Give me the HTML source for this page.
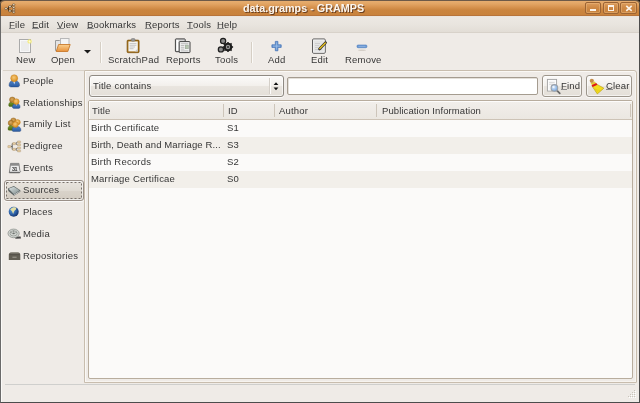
<!DOCTYPE html>
<html><head><meta charset="utf-8">
<style>
*{margin:0;padding:0;box-sizing:border-box}
html,body{width:640px;height:403px;overflow:hidden;background:#efebe7}
body{position:relative;font-family:"Liberation Sans",sans-serif;font-size:9.5px;letter-spacing:0.2px;color:#363636}
.a{position:absolute}
.t{position:absolute;white-space:nowrap;line-height:12px;will-change:transform}
u{text-decoration:none;position:relative}
u:after{content:"";position:absolute;left:0;right:0;bottom:1px;height:1px;background:#8a8a8a}
#win{position:absolute;left:0;top:0;width:640px;height:403px;border:1px solid #4c4c4c;border-left-color:#6a6a6a;border-top:none;background:#efebe7;box-shadow:inset 1px 0 0 #fbfaf8}
#title{position:absolute;left:0;top:0;width:640px;height:16px;background:linear-gradient(#e7ae70 0px,#e2a463 3px,#d48f4a 7px,#cb853f 9px,#c8823c 14px,#b8743a 14px,#b8743a 15px);border-radius:4px 4px 0 0;border-top:1px solid #6e5a48;box-shadow:inset 1px 0 0 #5a4a3a,inset -1px 0 0 #5a4a3a}
#title .tx{position:absolute;left:243px;top:1px;font-weight:bold;font-size:10.8px;letter-spacing:0;color:#fbf6f0;text-shadow:1px 1px 0 #6a4020;line-height:13px;will-change:transform}
.wb{position:absolute;top:1px;width:16px;height:12px;border:1px solid #9c6434;border-radius:2px;background:linear-gradient(#dc9c5c,#cd8844 50%,#c8823e);box-shadow:inset 0 0 0 1px rgba(240,190,130,.45)}
#menubar{position:absolute;left:1px;top:16px;width:638px;height:17px;background:linear-gradient(#e8e1d9 0px,#ece8e3 1px,#e9e5df 8px,#e2ddd6 16px);border-bottom:1px solid #d8d2ca}
.mi{position:absolute;top:3px;line-height:12px;will-change:transform}
#toolbar{position:absolute;left:1px;top:33px;width:638px;height:37px;background:#efebe7}
.tl{position:absolute;top:21px;line-height:12px;will-change:transform}
.sep{position:absolute;top:9px;width:1px;height:21px;background:#d6cfc5;box-shadow:1px 0 0 #fbfaf8}
.it{left:23px}
#pane{position:absolute;left:84px;top:70px;width:553px;height:313px;border:1px solid #c8bdae;border-radius:0 3px 1px 0;box-shadow:inset 1px 1px 0 #faf8f5,inset -1px -1px 0 #f7f4f0}
.btn{position:absolute;border:1px solid #9d968c;border-radius:3px;background:linear-gradient(#fbfaf9 0%,#f3f0ec 48%,#e9e5df 52%,#e4dfd8 100%);box-shadow:inset 0 0 0 1px rgba(255,255,255,.6),0 1px 0 rgba(255,255,255,.7)}
#tree{position:absolute;left:88px;top:100px;width:545px;height:279px;border:1px solid #b8ad9e;border-radius:2px;background:#fbfaf9;overflow:hidden}
#hdr{position:absolute;left:0;top:0;width:543px;height:19px;background:linear-gradient(#f2efeb,#ebe7e1);border-bottom:1px solid #cdc3b6;box-shadow:inset 1px 1px 0 #fdfcfb}
.hs{position:absolute;top:3px;width:1px;height:13px;background:#cdc5ba}
.row{position:absolute;left:0;width:543px;height:17px}
.row .t{top:2px}
#status{position:absolute;left:5px;top:384px;width:630px;height:1px;background:#cfcfcd}
</style></head><body>
<div id="win"></div>
<div class="a" style="left:0;top:0;width:4px;height:4px;background:#1e1a16"></div>
<div class="a" style="left:636px;top:0;width:4px;height:4px;background:#1e1a16"></div>
<div id="title">
  <div class="tx">data.gramps - GRAMPS</div>
  <div class="wb" style="left:585px;width:16px"><div class="a" style="left:4px;top:6px;width:6px;height:2px;background:#fbf3ea"></div></div>
  <div class="wb" style="left:603px;width:16px"><div class="a" style="left:4px;top:2px;width:6px;height:6px;border:1px solid #fbf3ea;border-top-width:2px"></div></div>
  <div class="wb" style="left:620px;width:17px"><svg class="a" style="left:4px;top:2px" width="8" height="7" viewBox="0 0 8 7"><path d="M1.3 0.8L6.7 5.9M6.7 0.8L1.3 5.9" stroke="#fbf3ea" stroke-width="1.6"/></svg></div>
</div>
<div id="menubar">
  <div class="mi" style="left:8px"><u>F</u>ile</div>
  <div class="mi" style="left:31px"><u>E</u>dit</div>
  <div class="mi" style="left:56px"><u>V</u>iew</div>
  <div class="mi" style="left:86px"><u>B</u>ookmarks</div>
  <div class="mi" style="left:144px"><u>R</u>eports</div>
  <div class="mi" style="left:186px"><u>T</u>ools</div>
  <div class="mi" style="left:216px"><u>H</u>elp</div>
</div>
<div id="toolbar">
  <div class="tl" style="left:15px">New</div>
  <div class="tl" style="left:50px">Open</div>
  <div class="sep" style="left:99px"></div>
  <div class="tl" style="left:107px">ScratchPad</div>
  <div class="tl" style="left:165px">Reports</div>
  <div class="tl" style="left:214px">Tools</div>
  <div class="sep" style="left:250px"></div>
  <div class="tl" style="left:267px">Add</div>
  <div class="tl" style="left:310px">Edit</div>
  <div class="tl" style="left:344px">Remove</div>
</div>
<div class="a" style="left:3px;top:70px;width:81px;height:1px;background:#d9d2c8"></div>
<div id="side">
  <div class="t it" style="top:75px">People</div>
  <div class="t it" style="top:97px">Relationships</div>
  <div class="t it" style="top:118px">Family List</div>
  <div class="t it" style="top:140px">Pedigree</div>
  <div class="t it" style="top:162px">Events</div>
  <div class="btn" style="left:4px;top:180px;width:80px;height:21px;border-color:#9a9088;background:linear-gradient(#e9e5df,#e0dbd3 50%,#d9d3ca 52%,#d3ccc2)"></div>
  <svg class="a" style="left:6px;top:182px" width="76" height="17" viewBox="0 0 76 17"><rect x="0.5" y="0.5" width="75" height="16" fill="none" stroke="#77706a" stroke-width="1" stroke-dasharray="2 2"/></svg>
  <div class="t it" style="top:184px">Sources</div>
  <div class="t it" style="top:206px">Places</div>
  <div class="t it" style="top:228px">Media</div>
  <div class="t it" style="top:250px">Repositories</div>
</div>
<div id="pane"></div>
<div class="btn" style="left:89px;top:75px;width:195px;height:22px;border-color:#8f8a83"></div>
<div class="a" style="left:269px;top:78px;width:1px;height:16px;background:#d4cfc8;box-shadow:1px 0 0 #fdfcfb"></div>
<svg class="a" style="left:273px;top:81px" width="6" height="10" viewBox="0 0 6 10"><path d="M0.6 4H5.4L3 1.2Z M0.6 6.4H5.4L3 9.2Z" fill="#111"/></svg>
<div class="t" style="left:93px;top:80px">Title contains</div>
<div class="a" style="left:287px;top:77px;width:251px;height:18px;border:1px solid #a59c90;border-radius:2px;background:#fff;box-shadow:inset 1px 1px 0 #e4e0da"></div>
<div class="btn" style="left:542px;top:75px;width:40px;height:22px"></div>
<div class="t" style="left:561px;top:80px"><u>F</u>ind</div>
<div class="btn" style="left:586px;top:75px;width:46px;height:22px"></div>
<div class="t" style="left:606px;top:80px"><u>C</u>lear</div>
<div id="tree">
  <div id="hdr">
    <div class="t" style="left:3px;top:4px">Title</div>
    <div class="hs" style="left:134px"></div>
    <div class="t" style="left:139px;top:4px">ID</div>
    <div class="hs" style="left:185px"></div>
    <div class="t" style="left:190px;top:4px">Author</div>
    <div class="hs" style="left:287px"></div>
    <div class="t" style="left:293px;top:4px;letter-spacing:0.1px">Publication Information</div>
    <div class="hs" style="left:541px"></div>
  </div>
  <div class="row" style="top:19px;background:#fbfaf9"><div class="t" style="left:2px">Birth Certificate</div><div class="t" style="left:138px">S1</div></div>
  <div class="row" style="top:36px;background:#f2efea"><div class="t" style="left:2px;letter-spacing:0.12px">Birth, Death and Marriage R...</div><div class="t" style="left:138px">S3</div></div>
  <div class="row" style="top:53px;background:#fbfaf9"><div class="t" style="left:2px">Birth Records</div><div class="t" style="left:138px">S2</div></div>
  <div class="row" style="top:70px;background:#f2efea"><div class="t" style="left:2px">Marriage Certificae</div><div class="t" style="left:138px">S0</div></div>
</div>
<div id="status"></div>
<svg class="a" style="left:626px;top:388px" width="11" height="11" viewBox="0 0 11 11"><g fill="#ffffff"><rect x="9" y="3" width="1" height="1"/><rect x="9" y="5" width="1" height="1"/><rect x="7" y="5" width="1" height="1"/><rect x="9" y="7" width="1" height="1"/><rect x="7" y="7" width="1" height="1"/><rect x="5" y="7" width="1" height="1"/><rect x="9" y="9" width="1" height="1"/><rect x="7" y="9" width="1" height="1"/><rect x="5" y="9" width="1" height="1"/><rect x="3" y="9" width="1" height="1"/></g><g fill="#c9c4bb"><rect x="8" y="2" width="1" height="1"/><rect x="8" y="4" width="1" height="1"/><rect x="6" y="4" width="1" height="1"/><rect x="8" y="6" width="1" height="1"/><rect x="6" y="6" width="1" height="1"/><rect x="4" y="6" width="1" height="1"/><rect x="8" y="8" width="1" height="1"/><rect x="6" y="8" width="1" height="1"/><rect x="4" y="8" width="1" height="1"/><rect x="2" y="8" width="1" height="1"/></g></svg>
<svg class="a" style="left:0;top:0" width="640" height="403" viewBox="0 0 640 403">
<defs>
 <linearGradient id="gOr" x1="0" y1="0" x2="0" y2="1"><stop offset="0" stop-color="#fbd08f"/><stop offset="1" stop-color="#e8913a"/></linearGradient>
 <radialGradient id="gHead" cx="0.45" cy="0.4" r="0.6"><stop offset="0" stop-color="#f6c878"/><stop offset="1" stop-color="#d98e1c"/></radialGradient>
 <radialGradient id="gHeadB" cx="0.45" cy="0.4" r="0.6"><stop offset="0" stop-color="#d9a860"/><stop offset="1" stop-color="#a8741c"/></radialGradient>
 <linearGradient id="gBlue" x1="0" y1="0" x2="0" y2="1"><stop offset="0" stop-color="#4f84c8"/><stop offset="1" stop-color="#2a5aa0"/></linearGradient>
 <linearGradient id="gGreen" x1="0" y1="0" x2="0" y2="1"><stop offset="0" stop-color="#7a9a2a"/><stop offset="1" stop-color="#4a6a10"/></linearGradient>
 <radialGradient id="gGlobe" cx="0.35" cy="0.35" r="0.75"><stop offset="0" stop-color="#5a9ad8"/><stop offset="0.6" stop-color="#2a5aa0"/><stop offset="1" stop-color="#0e2a5e"/></radialGradient>
 <radialGradient id="gLens" cx="0.4" cy="0.4" r="0.6"><stop offset="0" stop-color="#e0ecfa"/><stop offset="1" stop-color="#78a8e0"/></radialGradient>
</defs>
<!-- title icon -->
<g stroke="#3a2a18" stroke-width="0.9" fill="none">
 <path d="M7 8.6H8.5M8.5 6.6V10.9M8.5 6.6H11M8.5 10.9H11M11.5 6.6L12.5 4.8M11.5 6.6L12.5 7.5M11.5 10.9L12.5 9.9M11.5 10.9L12.5 12.2"/>
</g>
<g fill="#efe2c8" stroke="#4a3620" stroke-width="0.5">
 <rect x="4.8" y="7.6" width="2.4" height="2" rx="0.8"/>
 <rect x="8.7" y="5.6" width="2.4" height="2" rx="0.8"/><rect x="8.7" y="9.9" width="2.4" height="2" rx="0.8"/>
 <rect x="12.5" y="3.8" width="2.4" height="1.8" rx="0.8"/><rect x="12.5" y="6.6" width="2.4" height="1.8" rx="0.8"/>
 <rect x="12.5" y="9.0" width="2.4" height="1.8" rx="0.8"/><rect x="12.5" y="11.3" width="2.4" height="1.8" rx="0.8"/>
</g>
<!-- New -->
<rect x="19.5" y="39.5" width="11" height="13" fill="#ececec" stroke="#aaaaaa"/>
<rect x="20.5" y="40.5" width="9" height="11" fill="none" stroke="#fafafa" stroke-width="0.8"/>
<circle cx="29.6" cy="41.4" r="2.2" fill="#f4ec70" opacity="0.85"/>
<circle cx="29.6" cy="41.4" r="1" fill="#fffbe0"/>
<!-- Open -->
<path d="M55.5 50.5V40.5H59.5L60.5 41.5H63.5V50.5Z" fill="#e4e4e4" stroke="#9a9a9a"/>
<rect x="60.5" y="38.5" width="8.5" height="7" fill="#f4f4f4" stroke="#b8b8b8"/>
<path d="M56.2 51.5L58.6 44.5H70.2L67.8 51.5Z" fill="url(#gOr)" stroke="#c87a2c" stroke-width="0.9"/>
<!-- dropdown arrow -->
<path d="M84 50H91L87.5 53.5Z" fill="#1a1a1a"/>
<!-- ScratchPad -->
<rect x="127.1" y="40.1" width="12" height="12.6" rx="1" fill="#a06c14" stroke="#7a500c" stroke-width="0.7"/>
<rect x="128.4" y="41.4" width="9.4" height="10" fill="#f4f4f2"/>
<path d="M129.6 43.6H136.4M129.6 45.3H136.4M129.6 47H135M129.6 48.7H133.5" stroke="#a8a8a8" stroke-width="0.6"/>
<path d="M134.8 51.4L137.8 48.4V51.4Z" fill="#c8c8c8"/>
<rect x="131.2" y="38.6" width="3.8" height="2.6" rx="1" fill="#9a9a9a" stroke="#6a6a6a" stroke-width="0.5"/>
<!-- Reports -->
<rect x="175.4" y="38.9" width="9.8" height="12.8" rx="0.6" fill="#d4d4d4" stroke="#404040" stroke-width="1"/>
<rect x="176.4" y="39.9" width="2" height="10.8" fill="#ffffff"/>
<rect x="179.2" y="41.6" width="10.8" height="11" rx="0.6" fill="#f2f2f2" stroke="#404040" stroke-width="1"/>
<path d="M180.8 43.7H188.4M180.8 45.5H184.4M180.8 47.3H184.4M180.8 49.1H184.4M180.8 50.9H188.4" stroke="#a6a6a6" stroke-width="0.7"/>
<rect x="185.2" y="45" width="3.2" height="3.8" fill="#b6c4b0" stroke="#8a9a88" stroke-width="0.4"/>
<!-- Tools -->
<path d="M221.5 42.5L225.8 45.3M222.5 48.5L225.5 47.5" stroke="#2a2a2a" stroke-width="1.2"/>
<g fill="#1e1e1e">
 <circle cx="228" cy="47" r="4.3"/>
</g>
<g stroke="#1e1e1e" stroke-width="1.5">
 <path d="M228 41.9V52.1M222.9 47H233.1M224.4 43.4L231.6 50.6M224.4 50.6L231.6 43.4"/>
</g>
<circle cx="223.1" cy="40.9" r="2.6" fill="#8a8a8a" stroke="#1e1e1e" stroke-width="1.2"/>
<circle cx="220.9" cy="49.4" r="2.6" fill="#8a8a8a" stroke="#1e1e1e" stroke-width="1.2"/>
<circle cx="228" cy="47" r="2.2" fill="#9a9a9a"/>
<circle cx="228" cy="47" r="1" fill="#2a2a2a"/>
<!-- Add -->
<path d="M275.3 41.4H277.9V44.8H281.2V47.4H277.9V50.8H275.3V47.4H271.9V44.8H275.3Z" fill="#6a98d2" stroke="#3f6eb4" stroke-width="0.7"/>
<path d="M276.6 42.4V49.8M272.9 46.1H280.2" stroke="#a8c8ee" stroke-width="0.6"/>
<!-- Edit -->
<rect x="312.6" y="39" width="12.6" height="14.2" rx="1" fill="#e4e4e4" stroke="#3a3a3a" stroke-width="0.9"/>
<rect x="313.6" y="40" width="10.6" height="12.2" fill="none" stroke="#f6f6f6" stroke-width="0.8"/>
<path d="M315 43.5H320M315 45.5H319M315 47.5H318M315 49.5H322" stroke="#c0c0c0" stroke-width="0.6"/>
<path d="M319.5 49L325.6 42.6" stroke="#2a2a2a" stroke-width="2.6" stroke-linecap="round"/>
<path d="M319.8 48.6L325.3 42.9" stroke="#e8c020" stroke-width="1.4" stroke-linecap="round"/>
<!-- Remove -->
<ellipse cx="362" cy="50.2" rx="4" ry="0.7" fill="#c9c2b9" opacity="0.7"/>
<rect x="357" y="45" width="9.9" height="2.7" rx="1" fill="#6a98d2" stroke="#4a7abc" stroke-width="0.6"/>
<path d="M358.4 46.3H365.5" stroke="#b0cdf0" stroke-width="0.5"/>
<!-- People -->
<path d="M9.1 85.2C9.1 82.6 10.4 81 12.4 80.7L14.2 82.4L16 80.7C18 81 19.5 82.6 19.5 85.2C19.5 86.3 18.8 86.9 17.4 86.9H11.2C9.8 86.9 9.1 86.3 9.1 85.2Z" fill="url(#gBlue)" stroke="#2a4a80" stroke-width="0.5"/>
<path d="M13.4 81.3L14.2 84.6L15 81.3Z" fill="#ffffff"/>
<circle cx="14.2" cy="78.2" r="3.5" fill="url(#gHead)" stroke="#c07a18" stroke-width="0.4"/>
<!-- Relationships -->
<path d="M8.7 105.2C8.7 103.3 9.6 102.2 11 102L12.4 103L13.8 102C15.2 102.2 15.9 103.3 15.9 105.2C15.9 106 15.4 106.5 14.6 106.5H10C9.2 106.5 8.7 106 8.7 105.2Z" fill="url(#gGreen)" stroke="#3e5a10" stroke-width="0.4"/>
<circle cx="12.3" cy="99.8" r="2.8" fill="url(#gHeadB)" stroke="#8a5a18" stroke-width="0.4"/>
<path d="M12.4 107C12.4 105 13.6 104 15 103.8L16.3 104.8L17.6 103.8C19.1 104 20.1 105 20.1 107C20.1 107.8 19.6 108.4 18.8 108.4H13.7C12.9 108.4 12.4 107.8 12.4 107Z" fill="url(#gBlue)" stroke="#2a4a80" stroke-width="0.4"/>
<path d="M15.8 104.2L16.3 106L16.8 104.2Z" fill="#fff"/>
<circle cx="16.3" cy="101.6" r="2.9" fill="url(#gHead)" stroke="#c07a18" stroke-width="0.4"/>
<!-- Family List -->
<circle cx="13.4" cy="120.6" r="2.7" fill="url(#gHeadB)" stroke="#8a5a18" stroke-width="0.4"/>
<circle cx="10.9" cy="123" r="2.7" fill="url(#gHeadB)" stroke="#8a5a18" stroke-width="0.4"/>
<circle cx="17.6" cy="122.2" r="2.7" fill="url(#gHead)" stroke="#c07a18" stroke-width="0.4"/>
<path d="M8 129C8 127 8.9 125.7 10.5 125.4L12 126.2L13.5 125.4C15 125.7 15.7 127 15.7 129C15.7 129.8 15.2 130.3 14.4 130.3H9.3C8.5 130.3 8 129.8 8 129Z" fill="url(#gGreen)" stroke="#3e5a10" stroke-width="0.4"/>
<path d="M12.1 130C12.1 127.8 13.3 126.7 15 126.5L16.4 127.4L17.8 126.5C19.6 126.7 20.9 127.8 20.9 130C20.9 130.9 20.4 131.5 19.5 131.5H13.5C12.6 131.5 12.1 130.9 12.1 130Z" fill="url(#gBlue)" stroke="#2a4a80" stroke-width="0.4"/>
<circle cx="15.4" cy="124.6" r="2.9" fill="url(#gHead)" stroke="#c07a18" stroke-width="0.4"/>
<!-- Pedigree -->
<g stroke="#3e3e3e" stroke-width="0.8" fill="none">
 <path d="M10.8 146.6H12.2M12.2 143.6V149.4M12.2 143.6H13M12.2 149.4H13M15.6 143.6L17.6 142M15.6 143.6L17.6 144.8M15.6 149.4L17.6 148M15.6 149.4L17.6 150.8"/>
</g>
<g fill="#e4cba0" stroke="#a89272" stroke-width="0.4">
 <rect x="7.8" y="145.5" width="3" height="2.2" rx="0.4"/>
 <rect x="12.6" y="142.5" width="3" height="2.2" rx="0.4"/><rect x="12.6" y="148.3" width="3" height="2.2" rx="0.4"/>
 <rect x="17.4" y="140.9" width="3.2" height="2" rx="0.4"/><rect x="17.4" y="143.8" width="3.2" height="2" rx="0.4"/>
 <rect x="17.4" y="147" width="3.2" height="2" rx="0.4"/><rect x="17.4" y="149.9" width="3.2" height="2" rx="0.4"/>
</g>
<!-- Events -->
<path d="M10.6 163.4H18.9L19.8 170.4L20.6 171.2L19.6 172.8H9.3Z" fill="#ececec" stroke="#686868" stroke-width="0.8"/>
<path d="M10.7 163.6H18.8L19.1 165.8H10.4Z" fill="#8c8c8c"/>
<path d="M9.6 172.3H19.8" stroke="#5a5a5a" stroke-width="1"/>
<text x="11.9" y="170.8" font-family="Liberation Sans" font-weight="bold" font-size="5.4" letter-spacing="-0.3" fill="#2e2e2e">31</text>
<!-- Sources (book) -->
<defs><linearGradient id="gBook" x1="0" y1="0" x2="1" y2="1"><stop offset="0" stop-color="#dfe6e6"/><stop offset="1" stop-color="#7e8c8c"/></linearGradient></defs>
<path d="M7.9 188.6L13.8 186.1L20.3 190.2L20.3 191.7L14 195.8L8.3 191Z" fill="#5a6262"/>
<path d="M8.6 188.8L13.8 186.7L19.6 190.3L14 194.3Z" fill="url(#gBook)"/>
<path d="M14.2 194.6L19.8 191.1L19.8 191.6L14.2 195.2Z" fill="#f4f6f6"/>
<!-- Places globe -->
<circle cx="13.7" cy="211.7" r="5" fill="url(#gGlobe)"/>
<path d="M10.3 209.3C11.5 207.6 14 207 15.8 207.4C16.6 208.2 16.2 209.5 15 210.3C14 211 13.8 212.5 13.2 214C12.6 213.4 12.5 211.6 11.6 210.8C11 210.3 10.4 210 10.3 209.3Z" fill="#e2dfa6"/>
<!-- Media reel -->
<path d="M15 236.6L20.6 236.4L21 238.4L15.4 238.8Z" fill="#4a4a4a"/>
<ellipse cx="13.6" cy="233.4" rx="5.6" ry="4.3" fill="#d2d6d2" stroke="#8e928e" stroke-width="0.8"/>
<ellipse cx="13.6" cy="233.4" rx="3.6" ry="2.6" fill="none" stroke="#9a9e9a" stroke-width="0.9"/>
<ellipse cx="13.6" cy="233.3" rx="1.3" ry="0.9" fill="#6e726e"/>
<path d="M10.2 232L12 233M17 232L15.2 233M13.6 230.4V232" stroke="#7e827e" stroke-width="0.7"/>
<!-- Repositories -->
<path d="M8.8 259.9V254.8C8.8 253.2 10 252.2 11.6 252.2H17.5C19.1 252.2 20.3 253.2 20.3 254.8V259.9Z" fill="#625e54"/>
<path d="M10.2 253.2C10.8 252.6 11.4 252.5 12 252.5H17.2C17.9 252.5 18.5 252.7 19 253.2Z" fill="#a8a49a"/>
<path d="M9.3 254.6H19.8" stroke="#4e4a42" stroke-width="0.6"/>
<rect x="12.4" y="256.6" width="4.2" height="1.4" fill="#8e8a80"/>
<!-- Find icon -->
<rect x="547.4" y="79.4" width="9.2" height="11.6" fill="#f6f6f6" stroke="#a2a2a2" stroke-width="0.9"/>
<rect x="548.4" y="80.4" width="7.2" height="9.6" fill="none" stroke="#ffffff" stroke-width="0.6"/>
<path d="M549.2 82.6H554.6M549.2 84.4H552.5" stroke="#c4c4c4" stroke-width="0.6"/>
<path d="M557.3 90.8L559.8 93.4" stroke="#6a6a6a" stroke-width="1.7" stroke-linecap="round"/>
<circle cx="554.4" cy="87.9" r="3.3" fill="url(#gLens)" stroke="#9aa0a8" stroke-width="1.1"/>
<circle cx="553.5" cy="86.9" r="1.1" fill="#f4f8fc" opacity="0.8"/>
<!-- Clear broom -->
<path d="M592.4 86.6L597 84.4L603.9 88.2L597.3 93.9Z" fill="#f2dc1e" stroke="#bca418" stroke-width="0.7"/>
<path d="M595 89.5L600.5 90.5M594.5 87.8L598.5 92.5" stroke="#e0c418" stroke-width="0.5"/>
<path d="M590.6 83.3L594.6 81.5L596.5 83.6L592.3 85.5Z" fill="#e2cc38"/>
<path d="M591.5 85.3L596.3 83L597.4 84.8L592.6 87Z" fill="#e01818"/>
<circle cx="591.8" cy="80.8" r="2.1" fill="#c48c48"/>
</svg></body></html>
